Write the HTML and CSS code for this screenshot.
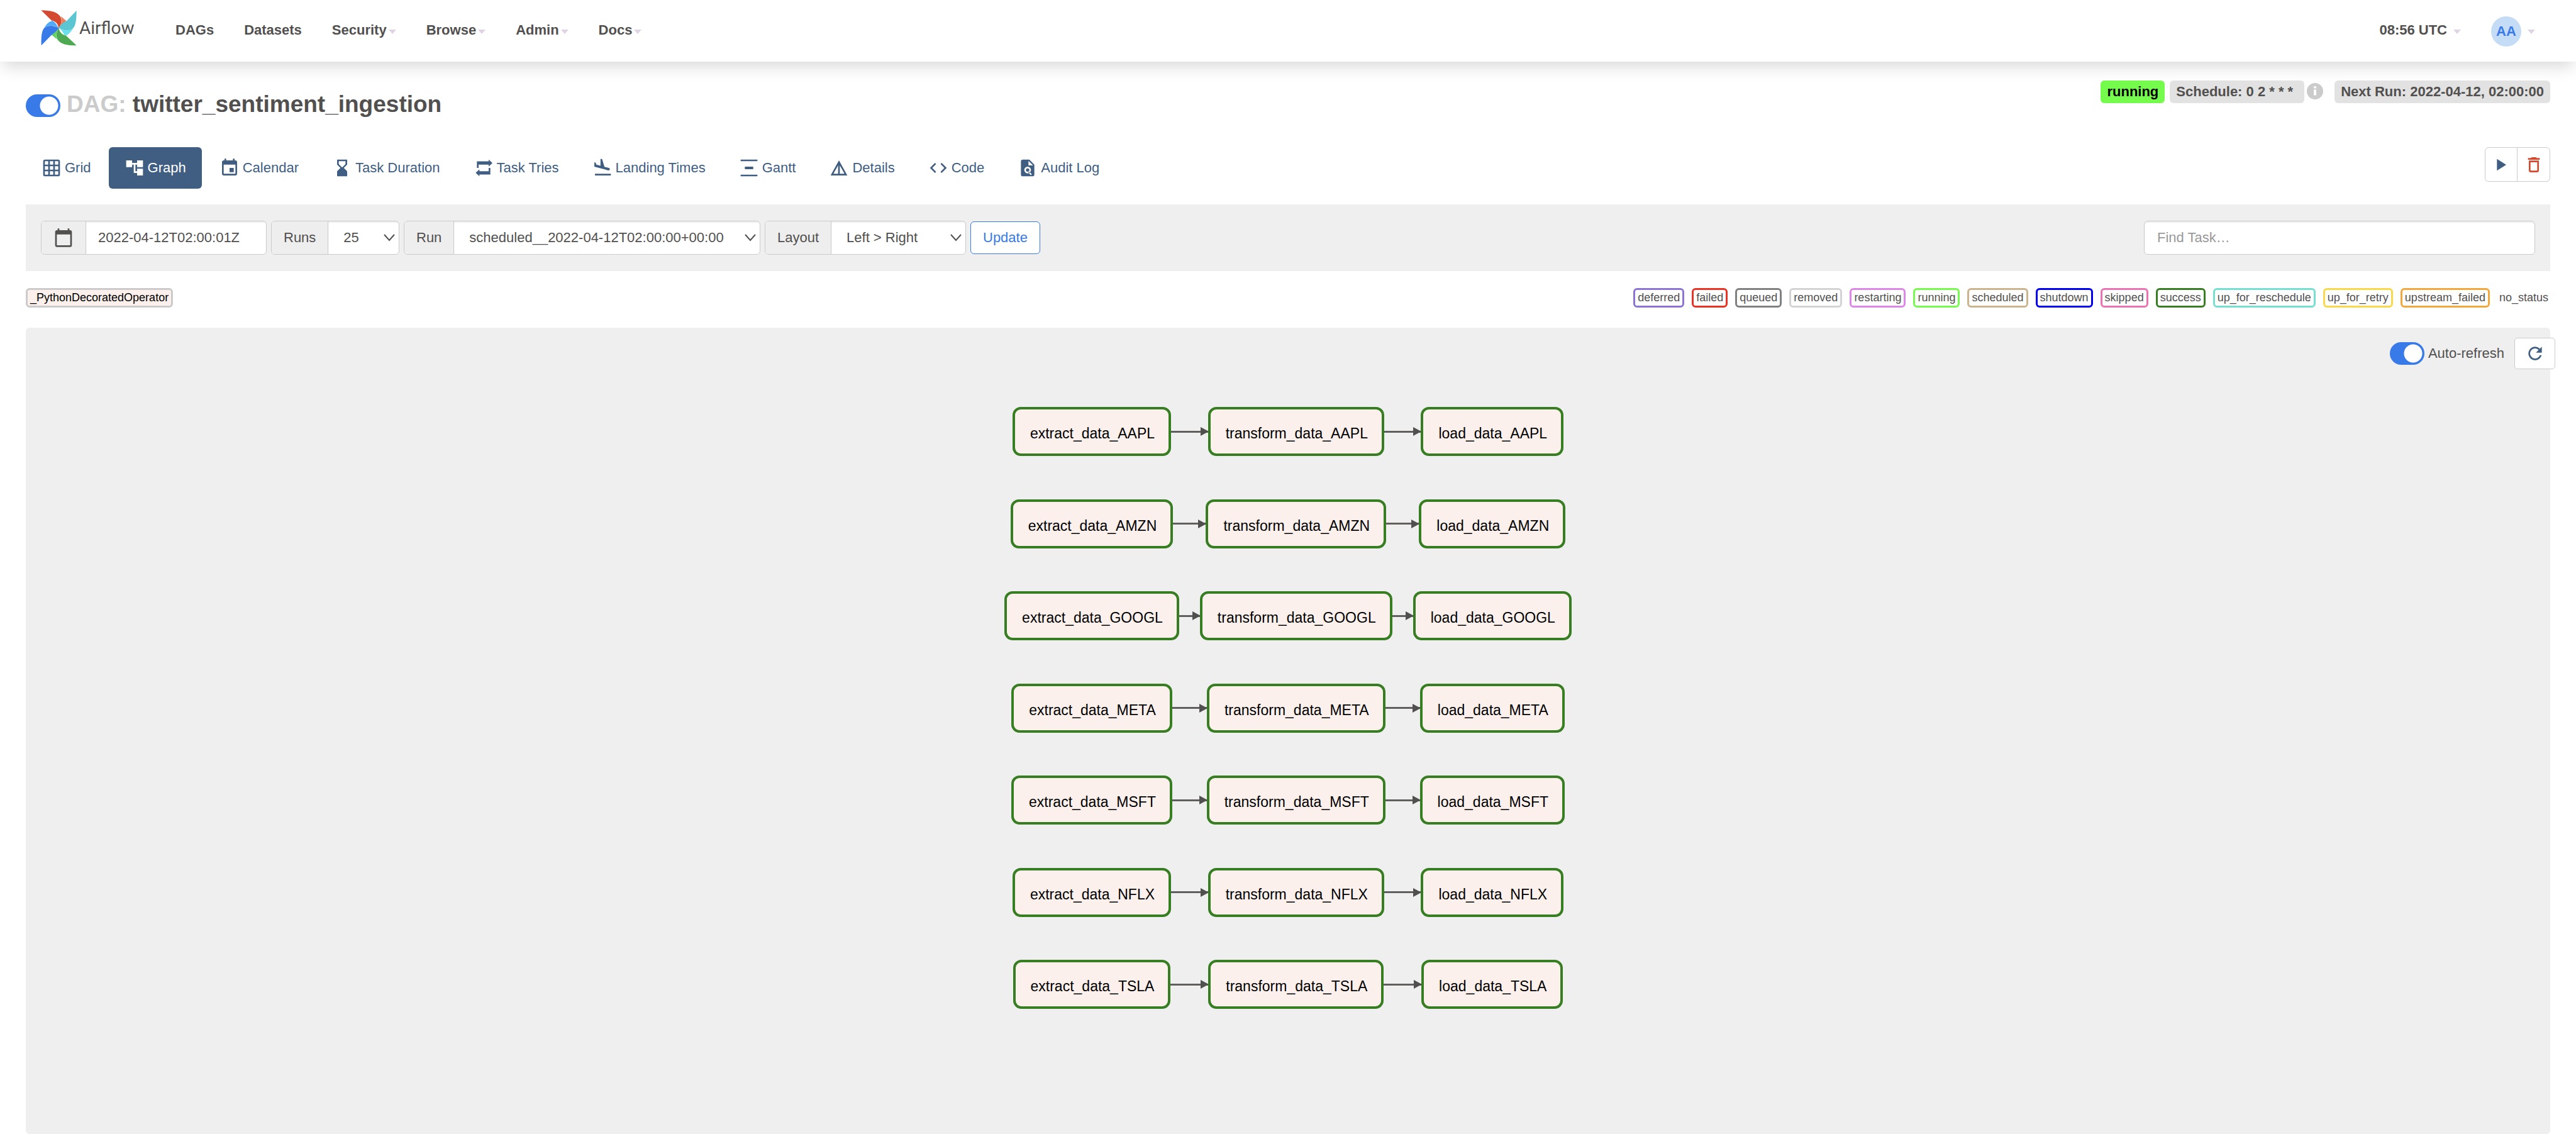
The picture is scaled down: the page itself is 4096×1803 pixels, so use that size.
FILE: index.html
```html
<!DOCTYPE html>
<html lang="en">
<head>
<meta charset="utf-8">
<meta name="viewport" content="width=device-width, initial-scale=1">
<title>twitter_sentiment_ingestion - Graph - Airflow</title>
<link rel="stylesheet" href="styles.css">
</head>
<body>
<header class="navbar">
  <a class="brand" href="#">
    <svg class="brand-mark" viewBox="105 47 172 172" aria-hidden="true">
      <path fill="#d34a30" d="M106 48C152 50 182 54 198 78C208 95 204 115 191 133C188 115 176 100 156 97Z"/>
      <path fill="#f07f62" d="M200 76L228 100C215 108 200 118 191 133C204 115 208 95 200 76Z"/>
      <path fill="#5bc5d1" d="M276 49C276 95 272 120 260 134C246 149 218 148 191 133C200 115 215 105 228 100Z"/>
      <path fill="#6be0ec" d="M191 133C218 148 246 149 260 134C248 155 235 167 220 171C212 155 205 142 191 133Z"/>
      <path fill="#4fa952" d="M276 217C228 216 202 211 186 190C176 170 180 150 191 133C193 150 205 165 226 170Z"/>
      <path fill="#63d163" d="M191 133C180 150 176 170 183 188L155 165C168 155 183 148 191 133Z"/>
      <path fill="#377ae8" d="M107 217C106 170 110 145 121 133C135 119 165 118 191 133C183 148 170 155 155 168Z"/>
      <path fill="#4fabf8" d="M191 133C165 118 138 118 121 133C130 115 142 103 160 98C172 103 182 118 191 133Z"/>
    </svg>
    <span class="brand-name">Airflow</span>
  </a>
  <nav class="nav-links">
    <a href="#">DAGs</a>
    <a href="#">Datasets</a>
    <a href="#">Security<span class="caret"></span></a>
    <a href="#">Browse<span class="caret"></span></a>
    <a href="#">Admin<span class="caret"></span></a>
    <a href="#">Docs<span class="caret"></span></a>
  </nav>
  <div class="nav-user">
    <a class="clock" href="#">08:56 UTC<span class="caret"></span></a>
    <a class="account" href="#"><span class="avatar">AA</span><span class="caret"></span></a>
  </div>
</header>

<main class="page">
  <div class="dag-head">
    <div class="dag-title">
      <input class="switch" type="checkbox" id="pause" aria-label="Pause or unpause the DAG" checked>
      <h1><span class="muted">DAG:</span> twitter_sentiment_ingestion</h1>
    </div>
    <div class="dag-labels">
      <a class="label label-running" href="#">running</a>
      <a class="label label-schedule" href="#">Schedule: 0 2 * * *</a>
      <svg class="info" viewBox="2 2 20 20" aria-hidden="true"><path d="M12 2a10 10 0 1 0 0 20 10 10 0 0 0 0-20zm1.500 15h-3v-7h3zm0-8.500h-3v-2.500h3z"/></svg>
      <span class="label">Next Run: 2022-04-12, 02:00:00</span>
    </div>
  </div>

  <div class="tab-row">
    <nav class="tabs">
      <a href="#"><svg viewBox="0 0 24 24"><path d="M20 2H4c-1.100 0-2 .9-2 2v16c0 1.100.9 2 2 2h16c1.100 0 2-.9 2-2V4c0-1.100-.9-2-2-2zM8 20H4v-4h4zm0-6H4v-4h4zm0-6H4V4h4zm6 12h-4v-4h4zm0-6h-4v-4h4zm0-6h-4V4h4zm6 12h-4v-4h4zm0-6h-4v-4h4zm0-6h-4V4h4z"/></svg>Grid</a>
      <a class="active" href="#"><svg viewBox="0 0 24 24"><path d="M22 11V3h-7v3H9V3H2v8h7V8h2v10h4v3h7v-8h-7v3h-2V8h2v3z"/></svg>Graph</a>
      <a href="#"><svg viewBox="0 0 24 24"><path d="M17 12h-5v5h5zM16 1v2H8V1H6v2H5c-1.100 0-2 .9-2 2v14c0 1.100.9 2 2 2h14c1.100 0 2-.9 2-2V5c0-1.100-.9-2-2-2h-1V1zm3 18H5V8h14z"/></svg>Calendar</a>
      <a href="#"><svg viewBox="0 0 24 24"><path d="M18 22l-.01-6L14 12l3.990-4.010L18 2H6v6l4 4-4 3.990V22zM8 7.500V4h8v3.500l-4 4z"/></svg>Task Duration</a>
      <a href="#"><svg viewBox="0 0 24 24"><path d="M4 4.200h14V2l4.500 4.200-4.500 4.200V8H6v4H4zM20 19.800H7V22l-4.500-4.200L7 13.600V16h11v-4h2z"/></svg>Task Tries</a>
      <a href="#"><svg viewBox="0 0 24 24"><path d="M2.500 19h19v2h-19zM14 13.770l4.350 1.160c.8.210 1.620-.26 1.840-1.060.21-.8-.26-1.620-1.060-1.840L13.820 10.600 11.060 1.580 9.130 1.060v8.280L4.160 8.010l-.93-2.320-1.450-.39v5.170L14 13.770z" transform="translate(.5 0)"/></svg>Landing Times</a>
      <a href="#"><svg viewBox="0 0 24 24"><path d="M2 2h20v2H2zM2 20h20v2H2zM7 10.500h10v3H7z"/></svg>Gantt</a>
      <a href="#"><svg viewBox="0 0 24 24"><path d="M12 3L2 21h20zm1 5.920L18.600 19H13zm-2 0V19H5.400z"/></svg>Details</a>
      <a href="#"><svg viewBox="0 0 24 24"><path d="M9.400 16.600L4.800 12l4.600-4.600L8 6l-6 6 6 6zm5.200 0l4.600-4.600-4.600-4.600L16 6l6 6-6 6z"/></svg>Code</a>
      <a href="#"><svg viewBox="0 0 24 24"><path fill-rule="evenodd" d="M14 2H6c-1.100 0-2 .9-2 2v16c0 1.100.9 2 2 2h12c1.100 0 2-.9 2-2V8zM13 3.500L18.500 9H13zM12 10.500a4 4 0 1 1-.01 8 4 4 0 0 1 .01-8zm0 2a2 2 0 1 0 .01 4 2 2 0 0 0-.01-4zm2 4l3 3-1.200 1.200-3-3z"/></svg>Audit Log</a>
    </nav>
    <div class="actions">
      <button type="button" aria-label="Trigger DAG"><svg viewBox="0 0 24 24"><path d="M7 5v14l11-7z"/></svg></button>
      <button type="button" class="danger" aria-label="Delete DAG"><svg viewBox="0 0 24 24"><path d="M6 19c0 1.100.9 2 2 2h8c1.100 0 2-.9 2-2V7H6zM8 9h8v10H8zm7.500-5l-1-1h-5l-1 1H5v2h14V4z"/></svg></button>
    </div>
  </div>

  <form class="filters">
    <div class="field field-date">
      <label class="addon" for="base_date" aria-label="Base date"><svg viewBox="0 0 24 24"><path d="M20 3h-1V1h-2v2H7V1H5v2H4c-1.100 0-2 .9-2 2v16c0 1.100.9 2 2 2h16c1.100 0 2-.9 2-2V5c0-1.100-.9-2-2-2zm0 18H4V8h16z"/></svg></label>
      <input type="text" id="base_date" value="2022-04-12T02:00:01Z">
    </div>
    <div class="field field-runs">
      <label class="addon" for="num_runs">Runs</label>
      <select id="num_runs"><option>25</option></select>
      <svg class="chevron" viewBox="0 0 18 12" aria-hidden="true"><path d="M1 1l8 9 8-9"/></svg>
    </div>
    <div class="field field-run">
      <label class="addon" for="run_id">Run</label>
      <select id="run_id"><option>scheduled__2022-04-12T02:00:00+00:00</option></select>
      <svg class="chevron" viewBox="0 0 18 12" aria-hidden="true"><path d="M1 1l8 9 8-9"/></svg>
    </div>
    <div class="field field-layout">
      <label class="addon" for="arrange">Layout</label>
      <select id="arrange"><option>Left &gt; Right</option></select>
      <svg class="chevron" viewBox="0 0 18 12" aria-hidden="true"><path d="M1 1l8 9 8-9"/></svg>
    </div>
    <button type="button" class="update">Update</button>
    <input class="search" type="text" placeholder="Find Task…" aria-label="Find task">
  </form>

  <div class="legend">
    <span class="chip operator">_PythonDecoratedOperator</span>
    <div class="states">
      <span class="chip deferred">deferred</span>
      <span class="chip failed">failed</span>
      <span class="chip queued">queued</span>
      <span class="chip removed">removed</span>
      <span class="chip restarting">restarting</span>
      <span class="chip running">running</span>
      <span class="chip scheduled">scheduled</span>
      <span class="chip shutdown">shutdown</span>
      <span class="chip skipped">skipped</span>
      <span class="chip success">success</span>
      <span class="chip reschedule">up_for_reschedule</span>
      <span class="chip retry">up_for_retry</span>
      <span class="chip upstream">upstream_failed</span>
      <span class="chip none">no_status</span>
    </div>
  </div>

  <section class="canvas">
    <div class="refresh">
      <input class="switch" type="checkbox" id="auto_refresh" checked>
      <label for="auto_refresh">Auto-refresh</label>
      <button type="button" aria-label="Refresh"><svg viewBox="0 0 24 24"><path d="M17.650 6.350A8 8 0 1 0 19.730 14h-2.080A6 6 0 1 1 12 6c1.660 0 3.140.69 4.220 1.780L13 11h7V4z"/></svg></button>
    </div>
    <div class="graph">
      <div class="cell first"><span class="node">extract_data_AAPL</span></div><i class="edge"></i>
      <div class="cell"><span class="node">transform_data_AAPL</span></div><i class="edge"></i>
      <div class="cell last"><span class="node">load_data_AAPL</span></div>

      <div class="cell first"><span class="node">extract_data_AMZN</span></div><i class="edge"></i>
      <div class="cell"><span class="node">transform_data_AMZN</span></div><i class="edge"></i>
      <div class="cell last"><span class="node">load_data_AMZN</span></div>

      <div class="cell first"><span class="node">extract_data_GOOGL</span></div><i class="edge"></i>
      <div class="cell"><span class="node">transform_data_GOOGL</span></div><i class="edge"></i>
      <div class="cell last"><span class="node">load_data_GOOGL</span></div>

      <div class="cell first"><span class="node">extract_data_META</span></div><i class="edge"></i>
      <div class="cell"><span class="node">transform_data_META</span></div><i class="edge"></i>
      <div class="cell last"><span class="node">load_data_META</span></div>

      <div class="cell first"><span class="node">extract_data_MSFT</span></div><i class="edge"></i>
      <div class="cell"><span class="node">transform_data_MSFT</span></div><i class="edge"></i>
      <div class="cell last"><span class="node">load_data_MSFT</span></div>

      <div class="cell first"><span class="node">extract_data_NFLX</span></div><i class="edge"></i>
      <div class="cell"><span class="node">transform_data_NFLX</span></div><i class="edge"></i>
      <div class="cell last"><span class="node">load_data_NFLX</span></div>

      <div class="cell first"><span class="node">extract_data_TSLA</span></div><i class="edge"></i>
      <div class="cell"><span class="node">transform_data_TSLA</span></div><i class="edge"></i>
      <div class="cell last"><span class="node">load_data_TSLA</span></div>
    </div>
  </section>
</main>
</body>
</html>
```
FILE: styles.css
```css
* { box-sizing: border-box; }

body {
  margin: 0;
  min-height: 100vh;
  display: flex;
  flex-direction: column;
  background: #fff;
  color: #51504f;
  font: 22px/32px "Liberation Sans", Arial, sans-serif;
}

a { color: inherit; text-decoration: none; }
svg { display: block; fill: currentColor; flex: none; }
button, input, select { font: inherit; color: inherit; margin: 0; }

/* Top bar */
.navbar {
  display: flex;
  align-items: flex-start;
  height: 98px;
  padding: 16px 65px 0;
  box-shadow: 0 12px 24px -4px rgba(0, 0, 0, .15);
}
.brand { display: flex; gap: 4px; width: 214px; }
.brand-mark { width: 57px; height: 57px; }
.brand-name { font: 400 28px/57px Roboto, sans-serif; }
.nav-links { display: flex; gap: 48px; font-weight: 700; line-height: 64px; }
.nav-links a, .nav-user a { display: flex; align-items: center; }
.nav-links a { gap: 3px; }
.caret {
  margin-top: 4px;
  border: 6px solid transparent;
  border-top: 7px solid #e0d3e4;
  border-bottom: 0;
}
.nav-user {
  display: flex;
  gap: 48px;
  margin-left: auto;
  font-weight: 700;
  line-height: 64px;
}
.nav-user a { gap: 10px; height: 64px; }
.avatar {
  width: 48px;
  height: 48px;
  margin-top: 4px;
  border-radius: 50%;
  background: #c5dcf7;
  color: #377ae8;
  line-height: 48px;
  text-align: center;
}

/* DAG heading */
.page {
  flex: 1;
  display: flex;
  flex-direction: column;
  padding: 30px 41px 0;
}
.dag-head { display: flex; justify-content: space-between; align-items: flex-start; height: 106px; }
.dag-title { display: flex; align-items: center; gap: 10px; padding-top: 20px; }
.dag-title h1 { margin: 0; padding-bottom: 4px; font-size: 37px; line-height: 36px; font-weight: 700; }
.muted { color: #cbcbcb; }
.switch {
  appearance: none;
  width: 55px;
  height: 36px;
  flex: none;
  border-radius: 18px;
  background: radial-gradient(circle at 37px 18px, #fff 14px, transparent 15px) #377ae8;
}
.dag-labels { display: flex; }
.label {
  padding: 0 10px;
  border-radius: 6px;
  background: #e2e2e2;
  font-weight: 700;
  line-height: 36px;
}
.label-running { margin-right: 8px; background: #75fb4c; color: #000; }
.label-schedule { padding-right: 18px; }
.info { width: 26px; height: 26px; margin: 4px 18px 0 4px; color: #cbcbcb; }

/* View tabs */
.tab-row { display: flex; justify-content: space-between; align-items: flex-start; height: 91px; }
.tabs { display: flex; gap: 3px; color: #405e82; }
.tabs a {
  display: flex;
  align-items: center;
  gap: 5px;
  height: 66px;
  padding: 0 25px;
  border-radius: 6px;
}
.tabs svg { width: 32px; height: 32px; }
.tabs .active { background: #405e82; color: #fff; }
.actions { display: flex; }
.actions button {
  display: flex;
  align-items: center;
  justify-content: center;
  width: 52px;
  height: 55px;
  padding: 0;
  border: 1px solid #cbcbcb;
  border-radius: 6px 0 0 6px;
  background: #fff;
  color: #405e82;
}
.actions button + button { width: 53px; margin-left: -1px; border-radius: 0 6px 6px 0; }
.actions .danger { color: #d34a30; }
.actions svg { width: 32px; height: 32px; }

/* Filters */
.filters {
  display: flex;
  align-items: center;
  gap: 7px;
  padding: 26px 24px;
  background: #efefef;
}
.field {
  position: relative;
  display: flex;
  height: 54px;
  border: 1px solid #cbcbcb;
  border-radius: 6px;
  background: #fff;
  overflow: hidden;
}
.addon {
  display: flex;
  align-items: center;
  padding: 0 19px;
  border-right: 1px solid #cbcbcb;
  background: #eee;
}
.addon svg { width: 32px; height: 32px; }
.field input, .field select {
  flex: 1;
  min-width: 0;
  appearance: none;
  border: 0;
  background: none;
  box-shadow: inset 0 2px 2px rgba(0, 0, 0, .07);
}
.field input { padding: 0 19px; }
.field select { padding: 0 24px; }
.chevron {
  position: absolute;
  right: 6px;
  top: 20px;
  width: 18px;
  height: 12px;
  fill: none;
  stroke: #51504f;
  stroke-width: 2;
}
.field-date { width: 359px; }
.field-runs { width: 204px; }
.field-run { width: 567px; }
.field-layout { width: 320px; }
.update {
  height: 52px;
  padding: 0 19px;
  border: 1px solid #377ae8;
  border-radius: 6px;
  background: #fff;
  color: #377ae8;
}
.search {
  width: 622px;
  height: 54px;
  margin-left: auto;
  padding: 0 20px;
  border: 1px solid #cbcbcb;
  border-radius: 6px;
  background: #fff;
  box-shadow: inset 0 2px 2px rgba(0, 0, 0, .07);
}
.search::placeholder { color: #999; opacity: 1; }

/* Legend */
.legend { display: flex; justify-content: space-between; padding: 27px 0 32px; }
.states { display: flex; gap: 12px; }
.chip {
  padding: 0 4px;
  border: 3px solid;
  border-radius: 6px;
  font-size: 18px;
  line-height: 25px;
  color: #51504f;
}
.operator { border-color: #cbcbcb; background: #fbf0ec; color: #000; }
.deferred { border-color: #8d73d6; }
.failed { border-color: #ea3323; }
.queued { border-color: #808080; }
.removed { border-color: #d3d3d3; }
.restarting { border-color: #df87e9; }
.running { border-color: #75fb4c; }
.scheduled { border-color: #ccb48f; }
.shutdown { border-color: #0000f5; }
.skipped { border-color: #ed72b4; }
.success { border-color: #377e22; }
.reschedule { border-color: #75dfd0; }
.retry { border-color: #f9d849; }
.upstream { border-color: #f3a83b; }
.none { padding: 3px; border: 0; }

/* Graph */
.canvas {
  position: relative;
  flex: 1;
  padding: 126px 0;
  border-radius: 6px;
  background: #efefef;
}
.refresh {
  position: absolute;
  top: 16px;
  right: -8px;
  display: flex;
  align-items: center;
  gap: 6px;
}
.refresh button {
  display: flex;
  align-items: center;
  justify-content: center;
  width: 65px;
  height: 50px;
  margin-left: 10px;
  padding: 0;
  border: 1px solid #cbcbcb;
  border-radius: 5px;
  background: #fff;
  color: #405e82;
}
.refresh svg { width: 32px; height: 32px; }
.graph {
  display: grid;
  grid-template-columns: auto 33px auto 33px auto;
  justify-content: center;
  align-content: space-between;
  align-items: center;
  min-height: 957px;
}
.cell { display: flex; align-items: center; }
.cell::before, .cell::after { content: ""; flex: 1; height: 3px; background: #605f5e; }
.edge { height: 3px; background: #605f5e; }
.first::before, .last::after { background: none; }
.node {
  position: relative;
  padding: 6px 22px 0 24px;
  border: 4px solid #377e22;
  border-radius: 13px;
  background: #fbf0ec;
  color: #000;
  font-size: 23px;
  line-height: 64px;
}
.node::before {
  content: "";
  position: absolute;
  left: -16px;
  top: 28px;
  border: 7px solid transparent;
  border-left: 13px solid #51504f;
  border-right: 0;
}
.first .node::before { content: none; }
```
